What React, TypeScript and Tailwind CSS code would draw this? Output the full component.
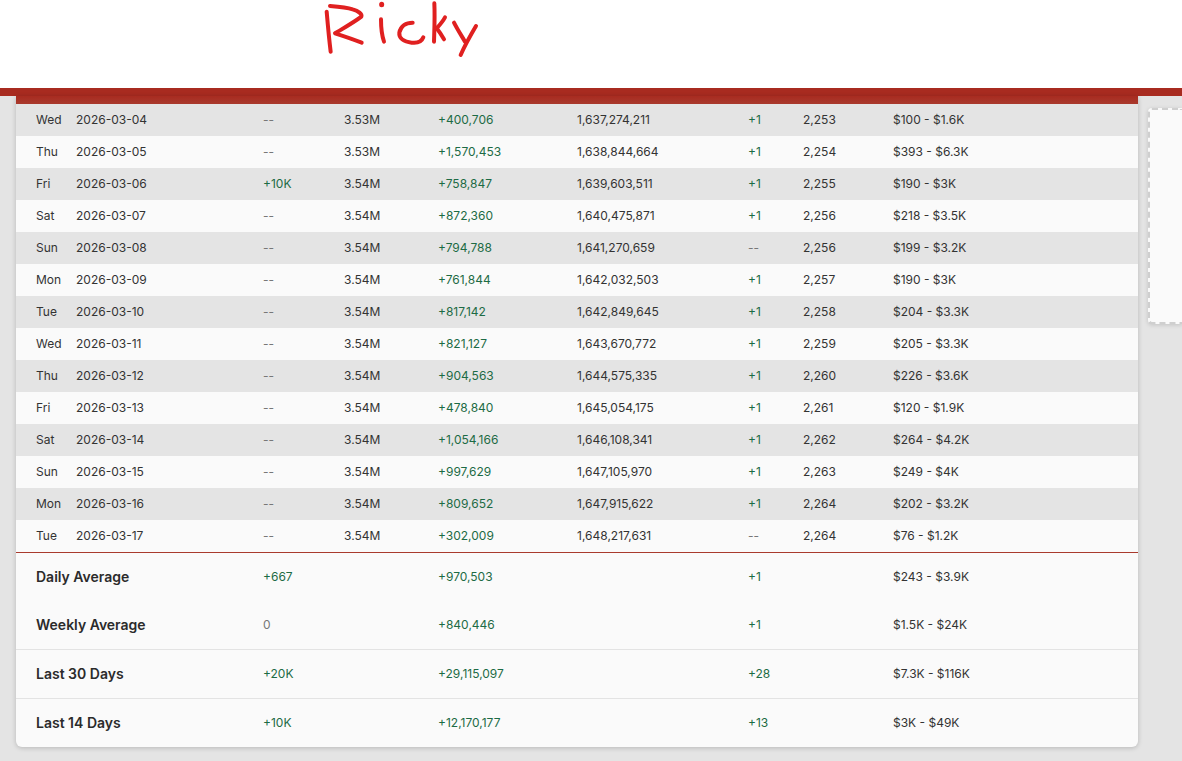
import React from "react"

/* ─────────────────── Data ─────────────────── */
const ROWS = [
  ["Wed", "2026-03-04", "--", "3.53M", "+400,706", "1,637,274,211", "+1", "2,253", "$100 - $1.6K"],
  ["Thu", "2026-03-05", "--", "3.53M", "+1,570,453", "1,638,844,664", "+1", "2,254", "$393 - $6.3K"],
  ["Fri", "2026-03-06", "+10K", "3.54M", "+758,847", "1,639,603,511", "+1", "2,255", "$190 - $3K"],
  ["Sat", "2026-03-07", "--", "3.54M", "+872,360", "1,640,475,871", "+1", "2,256", "$218 - $3.5K"],
  ["Sun", "2026-03-08", "--", "3.54M", "+794,788", "1,641,270,659", "--", "2,256", "$199 - $3.2K"],
  ["Mon", "2026-03-09", "--", "3.54M", "+761,844", "1,642,032,503", "+1", "2,257", "$190 - $3K"],
  ["Tue", "2026-03-10", "--", "3.54M", "+817,142", "1,642,849,645", "+1", "2,258", "$204 - $3.3K"],
  ["Wed", "2026-03-11", "--", "3.54M", "+821,127", "1,643,670,772", "+1", "2,259", "$205 - $3.3K"],
  ["Thu", "2026-03-12", "--", "3.54M", "+904,563", "1,644,575,335", "+1", "2,260", "$226 - $3.6K"],
  ["Fri", "2026-03-13", "--", "3.54M", "+478,840", "1,645,054,175", "+1", "2,261", "$120 - $1.9K"],
  ["Sat", "2026-03-14", "--", "3.54M", "+1,054,166", "1,646,108,341", "+1", "2,262", "$264 - $4.2K"],
  ["Sun", "2026-03-15", "--", "3.54M", "+997,629", "1,647,105,970", "+1", "2,263", "$249 - $4K"],
  ["Mon", "2026-03-16", "--", "3.54M", "+809,652", "1,647,915,622", "+1", "2,264", "$202 - $3.2K"],
  ["Tue", "2026-03-17", "--", "3.54M", "+302,009", "1,648,217,631", "--", "2,264", "$76 - $1.2K"],
]

const SUMMARY = [
  { label: "Daily Average", subs: "+667", views: "+970,503", vids: "+1", money: "$243 - $3.9K", border: false },
  { label: "Weekly Average", subs: "0", views: "+840,446", vids: "+1", money: "$1.5K - $24K", border: true },
  { label: "Last 30 Days", subs: "+20K", views: "+29,115,097", vids: "+28", money: "$7.3K - $116K", border: true },
  { label: "Last 14 Days", subs: "+10K", views: "+12,170,177", vids: "+13", money: "$3K - $49K", border: false },
]

/* ─────────────────── Cells ─────────────────── */
function Delta({ value }: { value: string }) {
  if (value.startsWith("+")) return <span className="text-[#1d6b45]">{value}</span>
  return <span className="text-[#777777]">{value}</span>
}

function Scribble() {
  return (
    <svg width="240" height="70" viewBox="0 0 720 210" fill="none" stroke="#e02020" strokeWidth="12" strokeLinecap="round" strokeLinejoin="round">
      <path d="M140 35 C143 70 147 115 152 155" />
      <path d="M150 18 C175 20 200 22 218 28 C235 33 247 42 244 50 C225 65 190 85 165 100 C190 108 220 118 245 128" />
      <path d="M305 13 L305 14" strokeWidth="15" />
      <path d="M303 58 C303 85 306 108 312 125" />
      <path d="M398 68 C378 68 362 78 358 98 C356 115 372 125 395 128 C412 130 425 125 430 112" />
      <path d="M463 10 C465 50 463 90 462 125" />
      <path d="M495 52 C488 65 478 76 470 85 C478 95 485 106 492 118" />
      <path d="M522 68 C532 88 545 108 555 125" />
      <path d="M588 78 C575 100 555 135 542 165" />
    </svg>
  )
}

/* ─────────────────── Page ─────────────────── */
export default function App() {
  return (
    <div className="w-[1182px] h-[761px] overflow-hidden bg-[#e4e4e4] font-['Inter',sans-serif] text-xs text-[#333333]">
      {/* Annotated top strip */}
      <div className="h-[88px] bg-white pl-[280px]">
        <Scribble />
      </div>
      <div className="h-2 bg-[#a82b20]" />

      <div className="flex gap-[10px] pl-4">
        {/* Stats card */}
        <div className="w-[1122px] shrink-0 overflow-hidden rounded-b-md bg-[#fafafa] shadow-[0_1px_5px_rgba(0,0,0,0.2)]">
          <div className="h-2 bg-gradient-to-b from-[#a82b20] to-[#a93a2d]" />
          {ROWS.map((r, i) => (
            <div key={r[1]} className={`grid h-8 grid-cols-[40px_187px_81px_94px_139px_171px_55px_90px_1fr] items-center pl-5 ${i % 2 === 0 ? "bg-[#e4e4e4]" : "bg-[#fafafa]"}`}>
              <span>{r[0]}</span>
              <span>{r[1]}</span>
              <Delta value={r[2]} />
              <span>{r[3]}</span>
              <Delta value={r[4]} />
              <span>{r[5]}</span>
              <Delta value={r[6]} />
              <span>{r[7]}</span>
              <span>{r[8]}</span>
            </div>
          ))}
          <div className="border-t border-[#a93a2d]">
            {SUMMARY.map((s) => (
              <div key={s.label} className={`grid grid-cols-[227px_175px_310px_145px_1fr] items-center pl-5 ${s.border ? "h-[49px] border-b border-[#e3e3e3]" : "h-12"}`}>
                <span className="text-sm font-semibold text-[#2b2b2b]">{s.label}</span>
                <Delta value={s.subs} />
                <Delta value={s.views} />
                <Delta value={s.vids} />
                <span>{s.money}</span>
              </div>
            ))}
          </div>
        </div>

        {/* Empty ad slot */}
        <div className="mt-3 h-[216px] flex-1 rounded-l-sm border-2 border-r-0 border-dashed border-[#cfcfcf] bg-[#fafafa] shadow-[0_1px_4px_rgba(0,0,0,0.15)]" />
      </div>
    </div>
  )
}
